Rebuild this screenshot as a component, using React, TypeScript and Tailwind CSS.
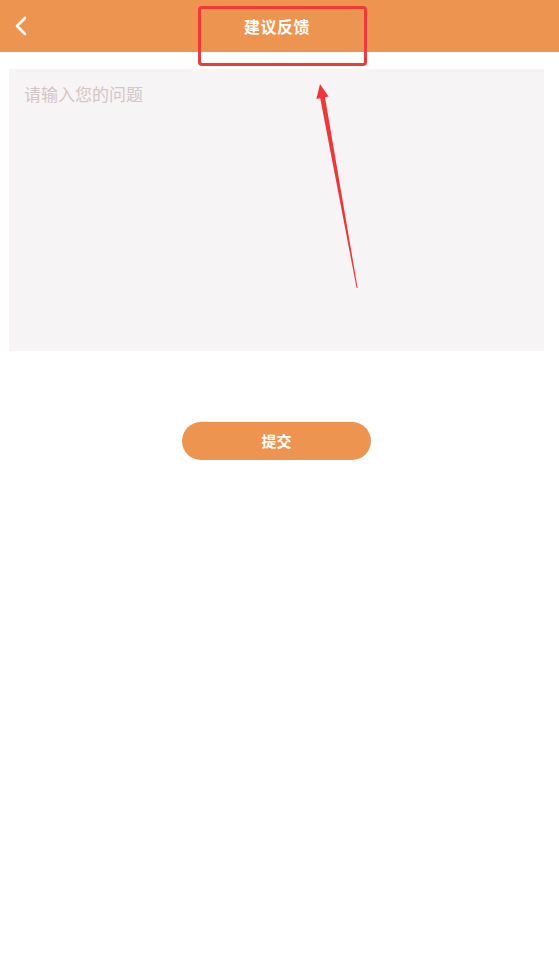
import React from 'react'

const FONT = '"Noto Sans CJK SC", "Noto Sans", sans-serif'

function BackIcon() {
  return (
    <svg width="14" height="20" viewBox="0 0 14 20" fill="none">
      <path d="M11 2 L3 10 L11 18" stroke="#ffffff" strokeWidth="2.6" strokeLinecap="round" strokeLinejoin="round" />
    </svg>
  )
}

// red annotation arrow laid over the page
function Annotation() {
  return (
    <svg className="absolute left-0 top-0 pointer-events-none" width="559" height="979" viewBox="0 0 559 979">
      <polygon
        points="320,84 328.6,96.6 325,97.3 357.6,288 356.6,288 320.2,98.3 316.4,99"
        fill="#ee3838"
      />
    </svg>
  )
}

export default function App() {
  return (
    <div className="relative w-[559px] h-[979px] bg-white overflow-hidden" style={{ fontFamily: FONT }}>
      {/* Header */}
      <div className="flex items-center h-[52px] bg-[#ed9450] pl-[14px]">
        <BackIcon />
        <span className="ml-[216px] text-[16px] font-bold text-white leading-none tracking-[0.5px]">建议反馈</span>
      </div>

      {/* Input area */}
      <div className="ml-[9px] mt-[17px] w-[535px] h-[282px] bg-[#f6f4f5] pl-[15px] pr-[15px] pt-[13px]">
        <textarea
          className="w-full h-full bg-transparent resize-none outline-none text-[17px] leading-[24px] text-[#555] placeholder:text-[#d3c6c4]"
          placeholder="请输入您的问题"
          style={{ fontFamily: FONT }}
        />
      </div>

      {/* Submit */}
      <button className="ml-[182px] mt-[71px] w-[189px] h-[38px] rounded-full bg-[#ed9450] text-white text-[15px] font-bold flex items-center justify-center">
        提交
      </button>

      {/* Annotation box */}
      <div className="absolute left-[198px] top-[6px] w-[169px] h-[60px] border-[3px] border-[#ee3a3a] rounded-[4px]" />
      <Annotation />
    </div>
  )
}
